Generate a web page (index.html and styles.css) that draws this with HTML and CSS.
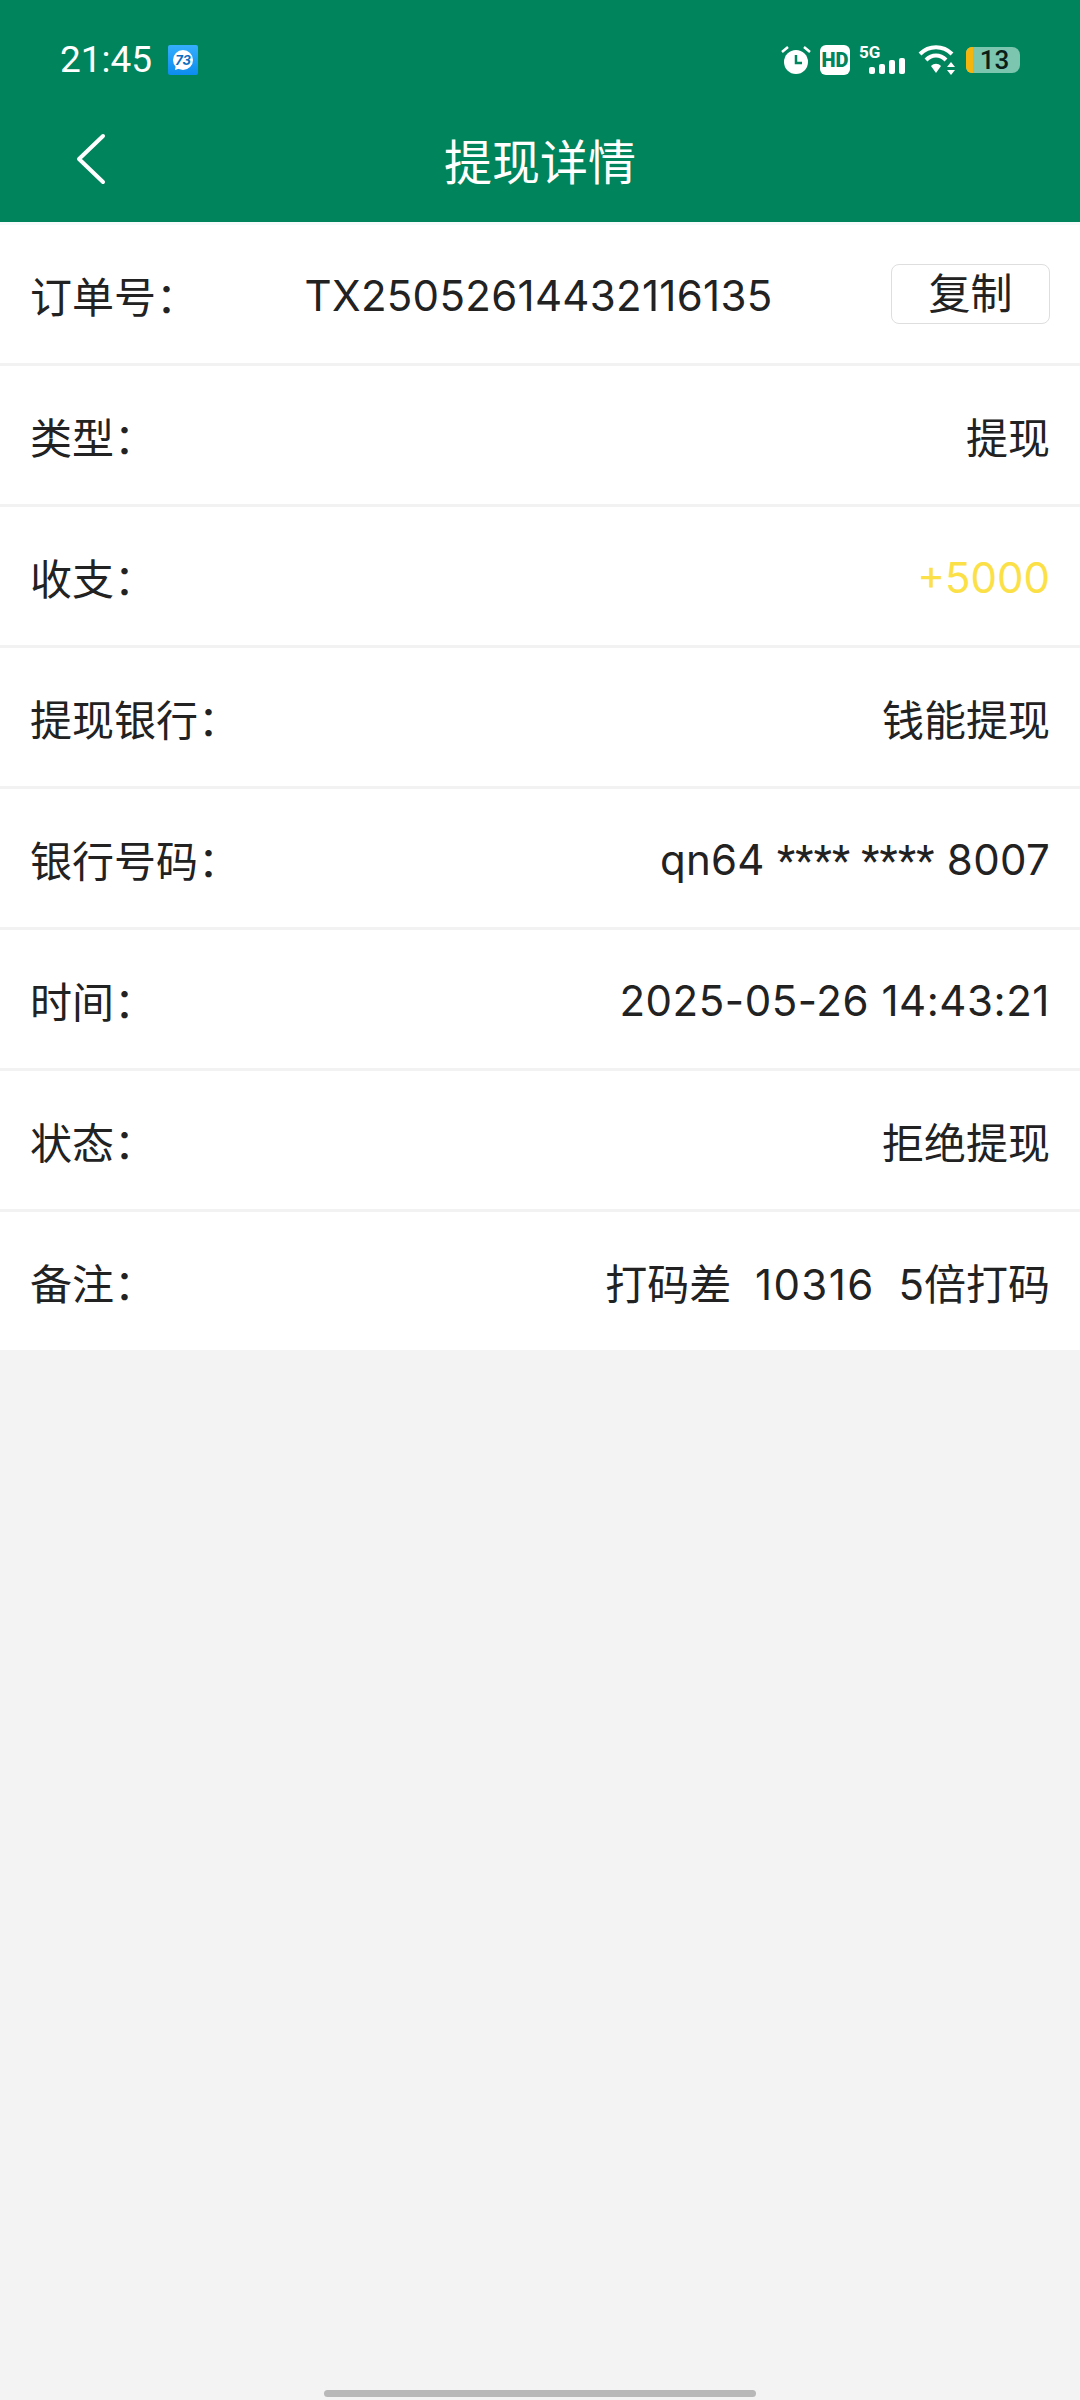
FILE: index.html
```html
<!DOCTYPE html>
<html lang="zh-CN">
<head>
    <meta charset="UTF-8">
    <meta name="viewport" content="width=device-width, initial-scale=1.0">
    <title>提现详情</title>
    <link rel="stylesheet" href="styles.css">
</head>
<body>

<div class="page">
    <header class="header">
        <div class="status-bar">
            <div class="status-left">
                <span class="clock">21:45</span>
                <svg class="app-badge" width="30" height="30" viewBox="0 0 30 30">
                    <defs>
                        <linearGradient id="badgeFill" x1="0" y1="0" x2="0" y2="1">
                            <stop offset="0" stop-color="#35aefc"/>
                            <stop offset="1" stop-color="#0c8cf0"/>
                        </linearGradient>
                    </defs>
                    <rect width="30" height="30" rx="2" fill="url(#badgeFill)"/>
                    <circle cx="15" cy="15" r="10" fill="#fff"/>
                    <path d="M8 20 L7 25 L13 23 Z" fill="#fff"/>
                    <text class="badge-text" x="15" y="19.5" text-anchor="middle">73</text>
                </svg>
            </div>
            <div class="status-right">
                <!-- alarm -->
                <svg width="30" height="28" viewBox="0 0 30 28">
                    <circle cx="15" cy="16" r="12" fill="#fff"/>
                    <path d="M15 9v8h6" fill="none" stroke="#00845c" stroke-width="2.5"/>
                    <path d="M1 6l6-5M29 6l-6-5" stroke="#fff" stroke-width="2.5" fill="none"/>
                </svg>
                <!-- HD -->
                <span class="hd-badge">HD</span>
                <!-- 5G signal -->
                <svg class="signal" width="46" height="34" viewBox="0 -4 46 34">
                    <text class="signal-text" x="0" y="13">5G</text>
                    <rect x="10" y="22" width="6" height="7" rx="2" fill="#fff"/>
                    <rect x="20" y="19" width="6" height="10" rx="2" fill="#fff"/>
                    <rect x="30" y="15" width="6" height="14" rx="2" fill="#fff"/>
                    <rect x="40" y="13" width="6" height="16" rx="2" fill="#fff"/>
                </svg>
                <!-- wifi -->
                <svg class="wifi" width="38" height="30" viewBox="0 0 38 30">
                    <path d="M2 9C11 0 25 0 34 9M8 15C14 9 22 9 28 15" fill="none" stroke="#fff" stroke-width="4"/>
                    <path d="M13 21C16 18 20 18 23 21L18 28Z" fill="#fff"/>
                    <path d="M33 17l4 5h-8zM33 30l4-5h-8z" fill="#fff"/>
                </svg>
                <div class="battery">
                    <span class="battery-level"></span>
                    <span class="battery-text">13</span>
                </div>
            </div>
        </div>
        <div class="nav-bar">
            <svg class="back-icon" width="32" height="52" viewBox="0 0 32 52">
                <path d="M28 3 L4 26 L28 49" fill="none" stroke="#fff" stroke-width="4" stroke-linecap="round" stroke-linejoin="round"/>
            </svg>
            <h1 class="nav-title">提现详情</h1>
        </div>
    </header>

    <div class="detail-list">
        <div class="detail-row">
            <span class="label">订单号：</span>
            <span class="value number order-no">TX25052614432116135</span>
            <button class="copy-btn">复制</button>
        </div>
        <div class="detail-row">
            <span class="label">类型：</span>
            <span class="value">提现</span>
        </div>
        <div class="detail-row">
            <span class="label">收支：</span>
            <span class="value income">+5000</span>
        </div>
        <div class="detail-row">
            <span class="label">提现银行：</span>
            <span class="value">钱能提现</span>
        </div>
        <div class="detail-row">
            <span class="label">银行号码：</span>
            <span class="value number">qn64 <span class="stars">**** ****</span> 8007</span>
        </div>
        <div class="detail-row">
            <span class="label">时间：</span>
            <span class="value number time">2025-05-26 14:43:21</span>
        </div>
        <div class="detail-row">
            <span class="label">状态：</span>
            <span class="value">拒绝提现</span>
        </div>
        <div class="detail-row">
            <span class="label">备注：</span>
            <span class="value remark">打码差 <span class="remark-num">10316</span> 5倍打码</span>
        </div>
    </div>

    <div class="home-indicator"></div>
</div>

</body>
</html>
```

FILE: styles.css
```css
body {
    font-family: Inter, "Noto Sans CJK SC", sans-serif;
    background-color: #f3f3f3;
    color: #222;
    margin: 0;
    padding: 0;
}

.page {
    height: 2400px;
    display: flex;
    flex-direction: column;
    overflow: hidden;
}

/* Green top area */
.header {
    height: 222px;
    background-color: #00845c;
    color: #fff;
    flex-shrink: 0;
}

.status-bar {
    height: 98px;
    padding: 40px 60px 0 60px;
    box-sizing: border-box;
    display: flex;
    justify-content: space-between;
    align-items: flex-start;
}

.status-left {
    display: flex;
    align-items: center;
    gap: 16px;
    margin-top: 5px;
}

.clock {
    font-family: Roboto, sans-serif;
    font-size: 37px;
    line-height: 30px;
}

.app-badge {
    display: block;
}

.badge-text {
    font-size: 13px;
    font-weight: 700;
    font-style: italic;
    fill: #0c6fc0;
}

.status-right {
    display: flex;
    align-items: center;
    gap: 9px;
    margin-top: 5px;
}

.hd-badge {
    width: 30px;
    height: 30px;
    background-color: #fff;
    color: #00845c;
    border-radius: 6px;
    font-family: Roboto, sans-serif;
    font-size: 20px;
    font-weight: 900;
    line-height: 30px;
    text-align: center;
}

.signal {
    margin-top: -4px;
}

.signal-text {
    font-family: Roboto, sans-serif;
    font-size: 17px;
    font-weight: 700;
    fill: #fff;
}

.wifi {
    margin-left: 4px;
}

.battery {
    width: 54px;
    height: 26px;
    margin-left: 1px;
    background-color: #7cc6b0;
    border-radius: 6px 8px 8px 6px;
    display: flex;
    align-items: center;
}

.battery-level {
    width: 7px;
    height: 100%;
    background-color: #f5b50f;
    border-radius: 6px 0 0 6px;
}

.battery-text {
    flex: 1;
    text-align: center;
    color: #0b1f18;
    font-family: Roboto, sans-serif;
    font-size: 26px;
    font-weight: 500;
    line-height: 30px;
    margin-right: 4px;
}

.nav-bar {
    height: 122px;
    position: relative;
    display: flex;
    align-items: center;
    justify-content: center;
}

.back-icon {
    position: absolute;
    left: 75px;
    top: 35px;
}

.nav-title {
    margin: 0;
    font-size: 48px;
    font-weight: 400;
}

/* Detail rows */
.detail-list {
    background-color: #fff;
}

.detail-row {
    height: 141px;
    box-sizing: border-box;
    border-top: 3px solid #f2f2f2;
    padding: 0 30px;
    display: flex;
    align-items: center;
    justify-content: space-between;
    font-size: 42px;
}

.detail-row:first-child {
    border-top-color: #f6fafa;
}

.number {
    letter-spacing: 0.3px;
    padding-top: 2px;
}

.order-no {
    margin-right: 12px;
}

.time {
    letter-spacing: 0.55px;
}

.stars {
    font-family: Roboto, sans-serif;
}

.income {
    color: #fce047;
    padding-top: 2px;
}

.remark {
    word-spacing: 12px;
}

.remark-num {
    letter-spacing: 1.4px;
}

.copy-btn {
    width: 159px;
    height: 60px;
    padding: 0;
    background-color: #fff;
    color: #222;
    border: 1px solid #dedede;
    border-radius: 8px;
    font-family: inherit;
    font-size: 42px;
    line-height: 56px;
}

.home-indicator {
    width: 432px;
    height: 7px;
    margin: auto auto 3px auto;
    background-color: #b8b8b8;
    border-radius: 4px;
}
```
